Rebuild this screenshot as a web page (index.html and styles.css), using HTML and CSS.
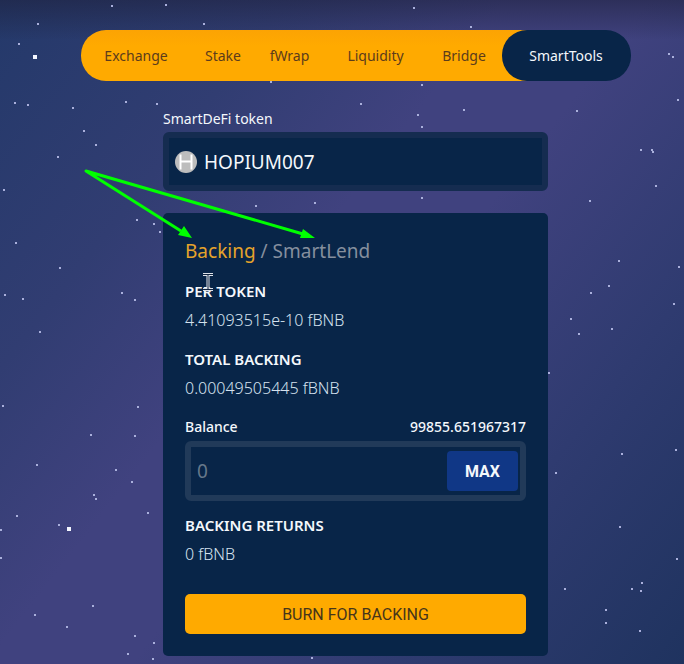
FILE: index.html
```html
<!DOCTYPE html>
<html lang="en">
<head>
<meta charset="utf-8">
<meta name="viewport" content="width=device-width, initial-scale=1">
<title>SmartTools</title>
<link rel="stylesheet" href="styles.css">
</head>
<body>
<svg class="stars" id="stars" aria-hidden="true"></svg>
<div class="page">
  <nav class="nav" aria-label="Main">
    <a href="#exchange">Exchange</a>
    <a href="#stake">Stake</a>
    <a href="#fwrap">fWrap</a>
    <a href="#liquidity">Liquidity</a>
    <a href="#bridge">Bridge</a>
    <a class="active" href="#smarttools" aria-current="page">SmartTools</a>
  </nav>
  <main class="column">
    <label class="token-label" for="token">SmartDeFi token</label>
    <div class="token-box">
      <svg class="token-icon" viewBox="0 0 22 22" aria-hidden="true">
        <circle cx="11" cy="11" r="11"/>
        <path d="M5.500 3.500v15M16.500 3.500v15M5.500 10.500h11"/>
      </svg>
      <input id="token" type="text" value="HOPIUM007">
    </div>
    <section class="card">
      <div class="tabs">
        <a class="current" href="#backing">Backing</a>
        <span>/</span>
        <a href="#smartlend">SmartLend</a>
      </div>
      <div class="stat">
        <h2>PER TOKEN</h2>
        <p>4.41093515e-10 fBNB</p>
      </div>
      <div class="stat">
        <h2>TOTAL BACKING</h2>
        <p>0.00049505445 fBNB</p>
      </div>
      <div class="amount">
        <div class="amount-head">
          <label for="amount">Balance</label>
          <span>99855.651967317</span>
        </div>
        <div class="amount-box">
          <input id="amount" type="text" placeholder="0">
          <button class="max" type="button">MAX</button>
        </div>
      </div>
      <div class="stat">
        <h2>BACKING RETURNS</h2>
        <p>0 fBNB</p>
      </div>
      <button class="burn" type="button">BURN FOR BACKING</button>
    </section>
  </main>
  <svg class="notes" viewBox="0 0 684 664" aria-hidden="true">
    <path class="line" d="M181 231 86 171l217 63"/>
    <path class="head" d="M192 238l-14-3 6-9zM315 238h-15l3-9z"/>
    <path class="beam-edge" d="M203 274.500h10M208 274.500v15M203 289.500h10"/>
    <path class="beam" d="M203 274.500h10M208 274.500v15M203 289.500h10"/>
  </svg>
</div>
<script src="stars.js"></script>
</body>
</html>
```
FILE: stars.js
```js
// Star positions as x, y pairs; the larger stars are listed apart.
const small = [
  [112,6],[166,5],[38,24],[204,24],[19,44],[271,82],[15,103],[28,105],[126,102],[157,104],[73,108],
  [84,131],[96,145],[58,157],[4,190],[256,206],[315,203],
  [414,8],[471,27],[422,85],[361,104],[418,115],[422,127],[464,110],[577,111],[669,54],[673,57],
  [678,100],[641,150],[652,150],[653,152],[656,186],[590,201],[422,198],
  [137,220],[154,224],[160,232],[16,243],[60,268],[5,295],[23,299],[122,293],[135,300],[40,332],
  [3,406],[138,407],[91,435],[135,436],[619,261],[679,267],[609,286],[591,293],[674,304],
  [571,319],[579,334],[612,329],[549,373],
  [37,465],[116,470],[132,482],[94,495],[96,499],[17,516],[59,525],[148,513],[1,530],[1,558],
  [93,606],[35,615],[67,627],[135,636],[154,643],[128,654],[153,659],[312,658],
  [622,454],[676,450],[556,473],[620,527],[677,559],[565,589],[632,589],[642,583],[641,591],
  [606,610],[606,623],[640,631]
];
const large = [[35,57],[69,529]];
const sky = document.getElementById("stars");
function star(x, y, size) {
  const dot = document.createElementNS("http://www.w3.org/2000/svg", "rect");
  dot.setAttribute("x", x - 1);
  dot.setAttribute("y", y - 1);
  dot.setAttribute("width", size);
  dot.setAttribute("height", size);
  if (size > 2) dot.setAttribute("class", "bright");
  sky.appendChild(dot);
}
small.forEach(([x, y]) => star(x, y, 2));
large.forEach(([x, y]) => star(x - 1, y - 1, 4));
```
FILE: styles.css
```css
* {
  box-sizing: border-box;
}

body {
  margin: 0;
  min-height: 100vh;
  color: #f4f8fc;
  font: 14px/28px "Noto Sans", "Open Sans", sans-serif;
  background:
    linear-gradient(rgba(30, 32, 60, .55), rgba(30, 32, 60, 0) 40px),
    linear-gradient(128deg, #24396a 0%, #313d72 24%, #40427f 42%, #40427f 54%, #2f3b70 76%, #1f335f 100%);
}

a {
  color: inherit;
  text-decoration: none;
}

input,
button {
  font: inherit;
  color: inherit;
  border: 0;
  margin: 0;
}

input {
  flex: 1;
  min-width: 0;
  padding: 0;
  background: none;
  outline: none;
}

.stars {
  position: absolute;
  inset: 0;
  width: 100%;
  height: 100%;
  fill: #aab0dc;
}

.stars .bright {
  fill: #f4f6ff;
}

.page {
  position: relative;
  padding: 30px 24px 7px 51px;
}

.nav {
  display: grid;
  grid-template-columns: 111fr 63fr 70fr 102fr 75fr 129fr;
  max-width: 550px;
  margin: 0 auto;
  border-radius: 25px;
  color: #5c3c1c;
  background: linear-gradient(#fca303, #ffaa00 16px) no-repeat 0 0 / 88% 100%;
}

.nav a {
  line-height: 51px;
  text-align: center;
}

.nav .active {
  color: #f4f8fc;
  background: #082548;
  border-radius: 25px;
}

.column {
  max-width: 385px;
  margin: 25px auto 0;
}

.token-label {
  display: block;
  line-height: 26px;
}

.token-box {
  display: flex;
  align-items: center;
  gap: 7px;
  height: 59px;
  padding: 0 6px;
  border: 6px solid #152c50;
  border-radius: 6px;
  background: #082548;
}

.token-box input {
  font-size: 19px;
}

.token-icon {
  width: 22px;
  height: 22px;
}

.token-icon circle {
  fill: #bdbdbd;
}

.token-icon path {
  fill: none;
  stroke: #fff;
  stroke-width: 2;
}

.card {
  display: flex;
  flex-direction: column;
  gap: 10px;
  margin-top: 22px;
  padding: 22px;
  border-radius: 5px;
  background: #082548;
}

.tabs {
  font-size: 19px;
  line-height: 32px;
  color: #858f9e;
}

.tabs .current {
  color: #e5a32b;
}

.stat h2 {
  margin: 0;
  font-size: 15px;
  line-height: 28px;
  font-weight: 600;
}

.stat p {
  margin: 0;
  font-size: 16px;
  line-height: 30px;
  font-weight: 300;
  color: #d5e2ef;
}

.amount-head {
  display: flex;
  justify-content: space-between;
  font-weight: 500;
}

.amount-box {
  display: flex;
  align-items: center;
  height: 60px;
  padding: 0 2px 0 6px;
  border: 6px solid #213a59;
  border-radius: 6px;
}

.amount-box input {
  font-size: 19px;
}

.amount-box input::placeholder {
  color: #66788a;
  opacity: 1;
}

.max {
  width: 71px;
  height: 40px;
  border-radius: 4px;
  font: 700 16px/40px Roboto, sans-serif;
  background: #103786;
}

.burn {
  height: 40px;
  margin-top: 15px;
  border-radius: 5px;
  font: 400 16px/40px Roboto, sans-serif;
  color: #46351b;
  background: #ffaa00;
}

.notes {
  position: absolute;
  top: 0;
  left: 50%;
  width: 684px;
  height: 664px;
  margin-left: -342px;
  pointer-events: none;
}

.line {
  fill: none;
  stroke: #00ff00;
  stroke-width: 3;
  stroke-linejoin: round;
}

.head {
  fill: #00ff00;
}

.beam,
.beam-edge {
  fill: none;
  stroke: #10233e;
  stroke-width: 1;
}

.beam-edge {
  stroke: #dde3ea;
  stroke-width: 3;
}
```
